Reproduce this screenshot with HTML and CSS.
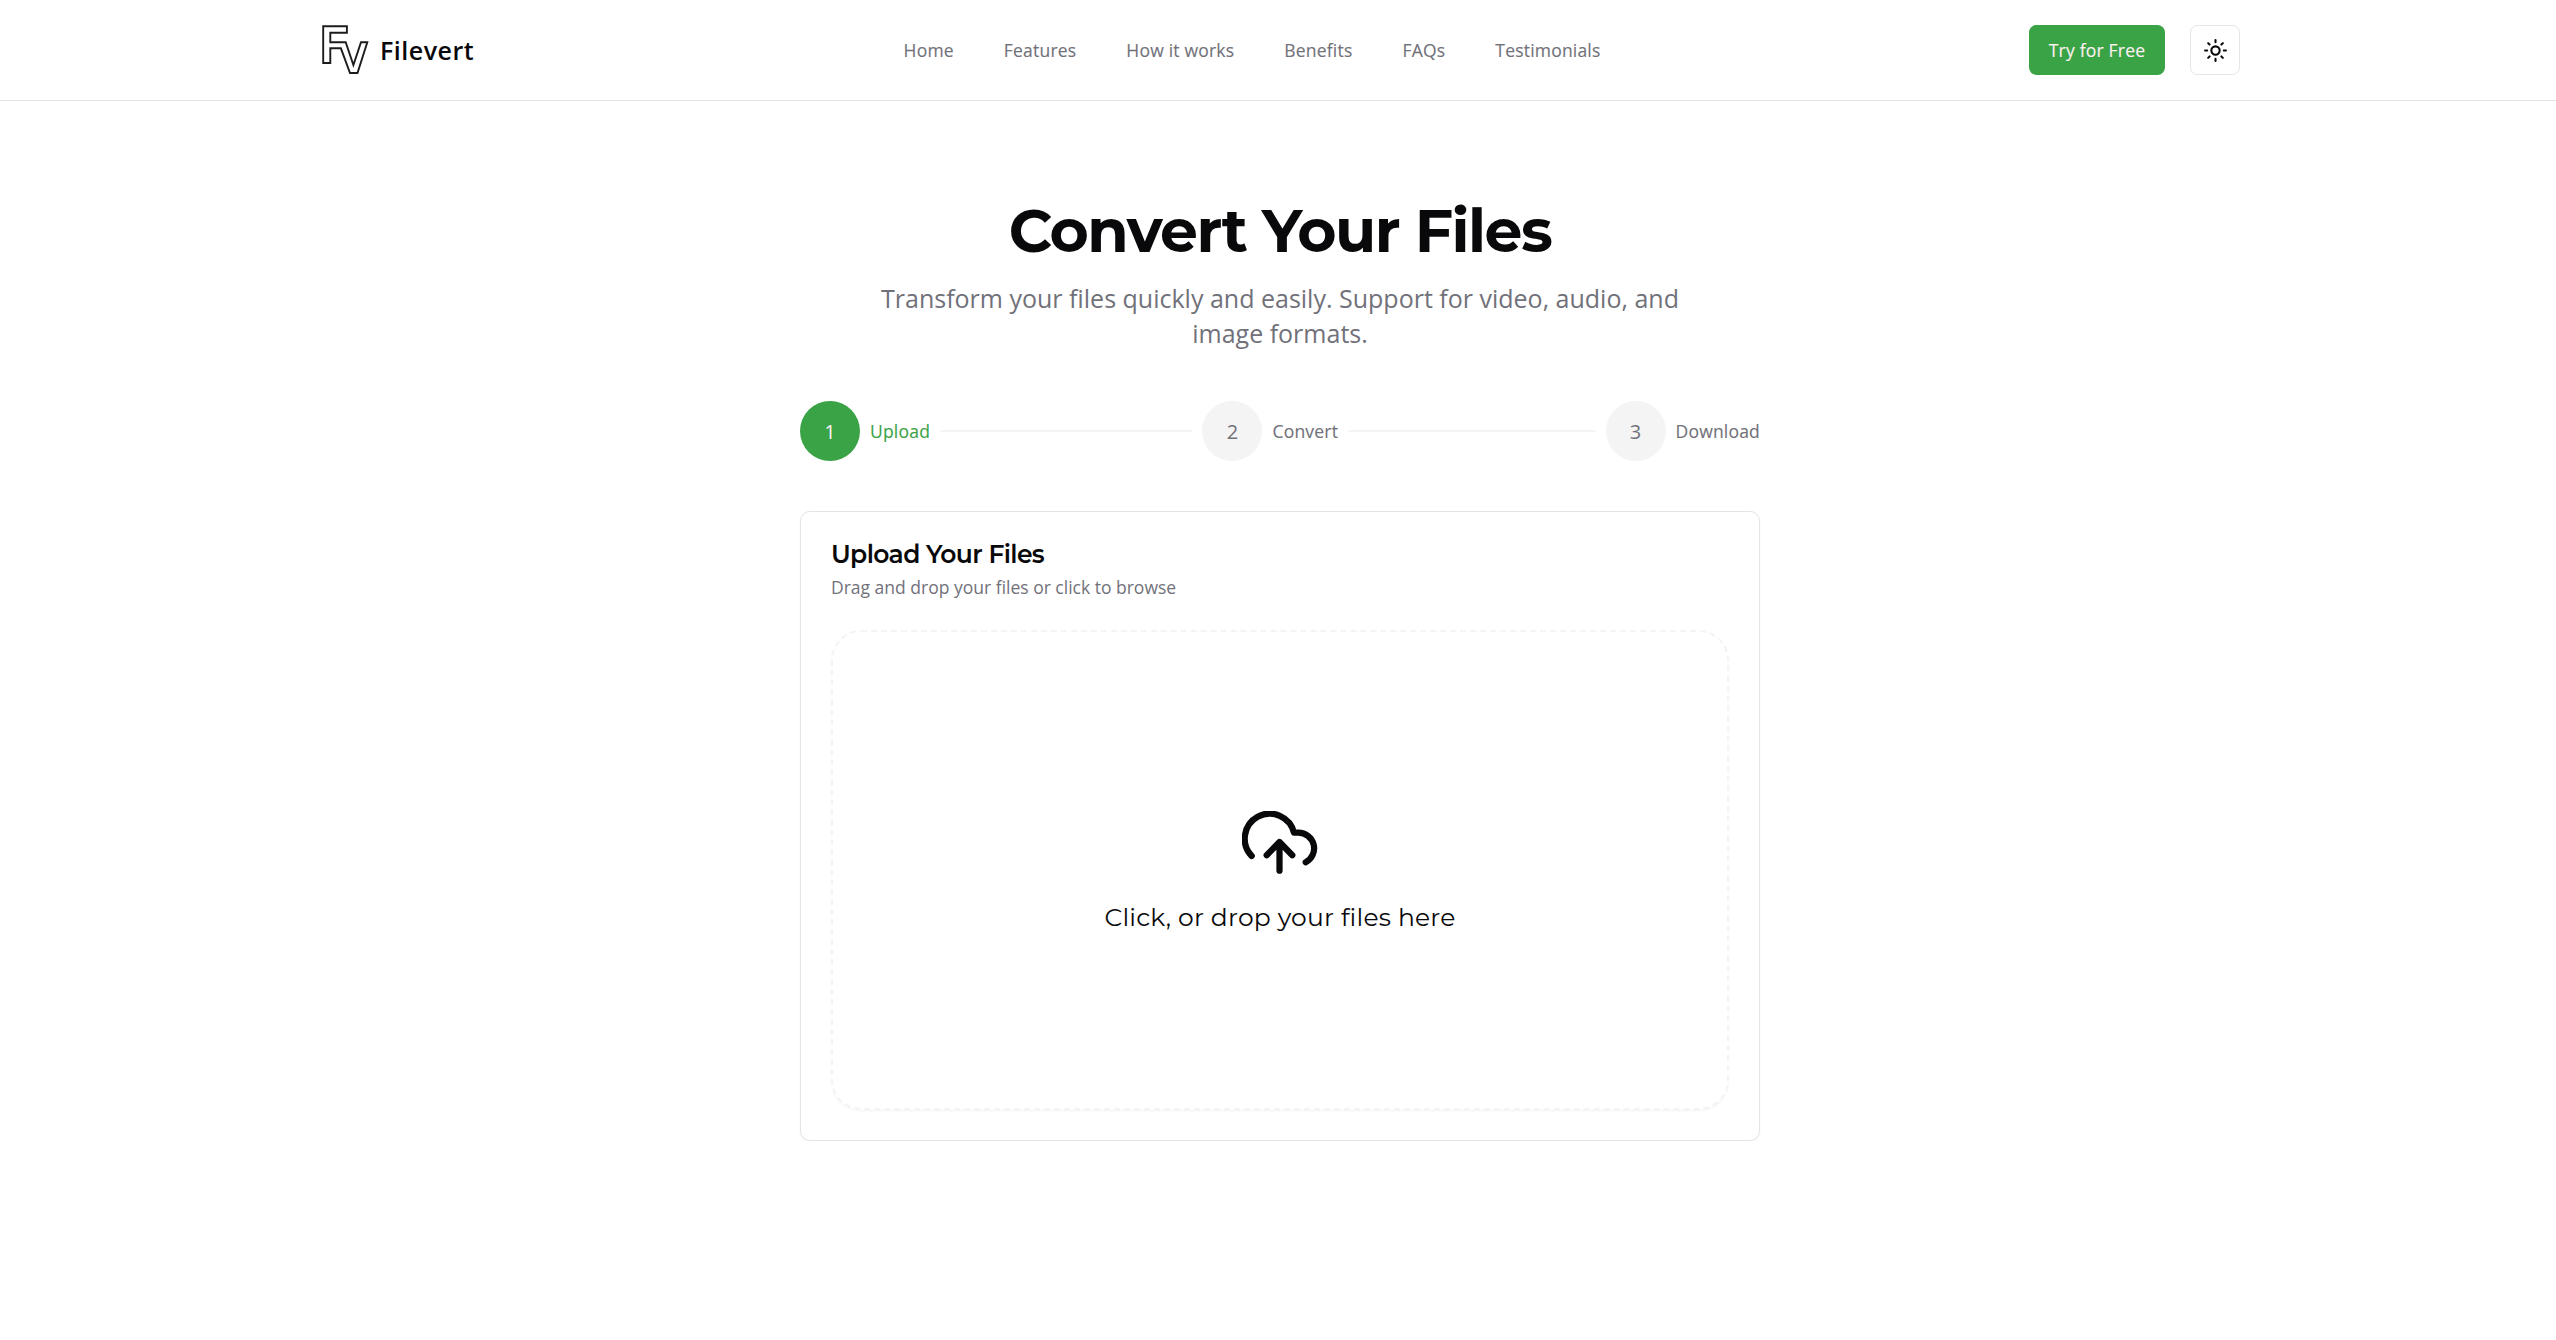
FILE: index.html
```html
<!DOCTYPE html>
<html lang="en">
<head>
<meta charset="utf-8">
<title>Filevert</title>
<link rel="stylesheet" href="styles.css">
</head>
<body>
<header class="header">
  <div class="header-inner">
    <a class="brand">
      <svg class="brand-mark" viewBox="0 0 50 50" fill="none" stroke="#1c1c1e" stroke-width="1.9">
        <path d="M3.200 38V1.200H26.900V7.700H10.300V17.200H25.700L33.400 40L41 17.200H47.300L37.500 48H30L20.900 23.300H10.300V38Z"/>
      </svg>
      <span>Filevert</span>
    </a>
    <nav class="nav">
      <a>Home</a>
      <a>Features</a>
      <a>How it works</a>
      <a>Benefits</a>
      <a>FAQs</a>
      <a>Testimonials</a>
    </nav>
    <div class="actions">
      <button class="cta">Try for Free</button>
      <button class="theme" aria-label="Toggle theme">
        <svg viewBox="0 0 24 24" fill="none" stroke="currentColor" stroke-width="2" stroke-linecap="round"><circle cx="12" cy="12" r="4"/><path d="M12 2v2M12 20v2M4.930 4.930l1.410 1.410M17.660 17.660l1.410 1.410M2 12h2M20 12h2M6.340 17.660l-1.410 1.410M19.070 4.930l-1.410 1.410"/></svg>
      </button>
    </div>
  </div>
</header>
<main class="main">
  <h1 class="title">Convert Your Files</h1>
  <p class="lead">Transform your files quickly and easily. Support for video, audio, and image formats.</p>
  <div class="steps">
    <div class="step active"><span class="dot">1</span><span class="step-name">Upload</span></div>
    <div class="line line-first"></div>
    <div class="step"><span class="dot">2</span><span class="step-name">Convert</span></div>
    <div class="line"></div>
    <div class="step"><span class="dot">3</span><span class="step-name">Download</span></div>
  </div>
  <section class="card">
    <h2 class="card-title">Upload Your Files</h2>
    <p class="card-text">Drag and drop your files or click to browse</p>
    <div class="drop">
      <svg class="cloud" viewBox="0 0 76 63" fill="none" stroke="currentColor" stroke-width="6.250" stroke-linecap="round" stroke-linejoin="round">
        <path d="M9.700 45A25 25 0 1 1 52 21.700H56.300A15.700 15.700 0 0 1 63.700 51.300"/>
        <path d="M37.500 59.700V31M24.700 44.200L37.500 31L50.300 44.200"/>
      </svg>
      <p class="drop-text">Click, or drop your files here</p>
    </div>
  </section>
</main>
</body>
</html>
```
FILE: styles.css
```css
* { box-sizing: border-box; margin: 0; padding: 0; }
body { background: #fff; color: #09090b; font-family: "Open Sans", sans-serif; font-size: 20px; }
button { font: inherit; }

.header { height: 101px; padding-left: 4px; border-bottom: 1px solid #e4e4e7; }
.header-inner { width: 1920px; height: 100px; margin: 0 auto; display: flex; align-items: center; justify-content: space-between; }
.brand { display: flex; align-items: center; gap: 10px; font-size: 25px; font-weight: 600; letter-spacing: .5px; }
.brand-mark { width: 50px; height: 50px; }
.nav { display: flex; gap: 50px; padding-left: 1px; font-size: 17.5px; color: #71717a; }
.nav a, .cta, .step-name { letter-spacing: .2px; -webkit-text-stroke: .12px currentColor; }
.actions { display: flex; gap: 25px; }
.cta { width: 136px; height: 50px; border: 0; border-radius: 7.5px; background: #39a346; color: #fff1f2; font-size: 17.5px; }
.theme { width: 50px; height: 50px; border: 1px solid #e4e4e7; border-radius: 7.5px; background: #fff; color: #09090b; display: grid; place-items: center; }
.theme svg { width: 25px; height: 25px; }

.main { width: 964px; margin: 0 auto; padding: 100px 0 0 4px; }
.title { font-family: Montserrat, sans-serif; font-size: 60px; font-weight: 700; letter-spacing: -.025em; line-height: 60px; text-align: center; }
.lead { margin: 20px 60px 0; font-size: 25px; line-height: 35px; color: #71717a; text-align: center; }

.steps { margin-top: 50px; display: flex; align-items: center; gap: 10px; color: #71717a; }
.step { display: flex; align-items: center; gap: 10px; font-size: 17.5px; }
.dot { width: 60px; height: 60px; border-radius: 50%; background: #f4f4f5; display: grid; place-items: center; font-size: 20px; }
.active { color: #39a346; }
.active .dot { background: #39a346; color: #fff1f2; }
.line { flex: 248; height: 2px; background: #f4f4f5; }
.line-first { flex: 253; }

.card { margin-top: 50px; height: 630px; padding: 30px; border: 1px solid #e4e4e7; border-radius: 10px; box-shadow: 0 1px 2px rgba(0, 0, 0, .05); }
.card-title { font-family: Montserrat, sans-serif; font-size: 25px; font-weight: 600; letter-spacing: -.025em; line-height: 25px; }
.card-text { margin-top: 8px; font-size: 17.5px; line-height: 25px; color: #71717a; }
.drop { margin-top: 30px; height: 480px; padding-top: 6px; border: 2px dashed #f4f4f5; border-radius: 30px; box-shadow: 0 1px 2px rgba(0, 0, 0, .05); display: flex; flex-direction: column; align-items: center; justify-content: center; gap: 26px; }
.cloud { width: 76px; height: 63px; }
.drop-text { font-family: Montserrat, sans-serif; font-size: 25px; font-weight: 400; letter-spacing: .2px; line-height: 35px; }
```
